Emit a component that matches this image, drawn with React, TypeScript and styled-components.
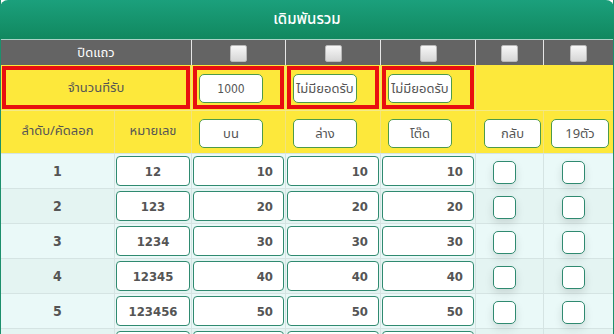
import styled, { createGlobalStyle } from "styled-components";

const GlobalStyle = createGlobalStyle`
body {
  margin: 0;
  background: #ffffff;
  font-family: "Noto Sans Thai", "Noto Sans", "DejaVu Sans", sans-serif;
}
* { box-sizing: border-box; }
`;

const COLS = "113px 77px 94px 95px 95px 68px 70px";
const NUM_FONT = `"DejaVu Sans Condensed", "DejaVu Sans", sans-serif`;

const Card = styled.div`
width: 614px;
border-left: 1px solid #1d8f6c;
border-right: 1px solid #1d8f6c;
`;

const Header = styled.div`
height: 39px;
display: flex;
align-items: center;
justify-content: center;
background: linear-gradient(#1ba07c, #11885f);
border-radius: 8px 8px 0 0;
color: #ffffff;
font-size: 15px;
font-weight: 500;
margin: 0 -1px;
`;

const Row = styled.div<{ $h: number; $bg: string }>`
display: grid;
grid-template-columns: ${COLS};
height: ${(p) => p.$h}px;
background: ${(p) => p.$bg};
`;

const GrayRow = styled(Row)`
border-top: 1px solid #a9d3c6;
`;

const HeadRow = styled(Row)`
border-top: 1px solid #f5ea86;
`;

const GrayCell = styled.div<{ $span?: number }>`
grid-column: span ${(p) => p.$span || 1};
display: flex;
align-items: center;
justify-content: center;
color: #ffffff;
font-size: 13px;
& + & { border-left: 1px solid #e6e6e6; }
`;

const Tick = styled.span`
width: 17px;
height: 17px;
border-radius: 2px;
border: 1px solid #b9b9b9;
background: linear-gradient(#f7f7f7, #d6d6d6);
margin-top: 1px;
`;

const ReceiveCell = styled.div<{ $span?: number }>`
grid-column: span ${(p) => p.$span || 1};
padding: 1px;
& + & { border-left: 1px solid #f1e27a; }
`;

const RedBox = styled.div<{ $center?: boolean }>`
height: 100%;
border: 4px solid #e80f0f;
display: flex;
align-items: ${(p) => (p.$center ? "center" : "flex-start")};
justify-content: ${(p) => (p.$center ? "center" : "flex-start")};
padding: ${(p) => (p.$center ? "0" : "4px 2px 0")};
color: #555555;
font-size: 13px;
`;

const SmallBox = styled.div<{ $w: number; $num?: boolean }>`
width: ${(p) => p.$w}px;
height: 29px;
background: #ffffff;
border: 1px solid #4d9a4a;
border-radius: 5px;
display: flex;
align-items: center;
justify-content: center;
color: #555555;
font-size: ${(p) => (p.$num ? 12 : 13)}px;
font-family: ${(p) => (p.$num ? NUM_FONT : "inherit")};
`;

const HeadCell = styled.div<{ $pad?: number }>`
display: flex;
align-items: flex-start;
justify-content: ${(p) => (p.$pad ? "flex-start" : "center")};
padding: ${(p) => (p.$pad ? `8px 0 0 ${p.$pad}px` : "10px 0 0")};
color: #555555;
font-size: 13px;
& + & { border-left: 1px solid #f2e37c; }
`;

const Body = styled.div``;

const DataRow = styled(Row)`
border-top: 1px solid #d5e4e3;
&:nth-child(even) { background: #e4f4f2; }
`;

const DataCell = styled.div`
display: flex;
align-items: center;
justify-content: center;
padding: 1px;
& + & { border-left: 1px solid #d5e4e3; }
`;

const Seq = styled.span`
font-family: ${NUM_FONT};
font-weight: bold;
font-size: 14px;
color: #555555;
`;

const NumBox = styled.div<{ $align: "center" | "right" }>`
width: 100%;
height: 30px;
background: #ffffff;
border: 1px solid #2f8a70;
border-radius: 4px;
display: flex;
align-items: center;
justify-content: ${(p) => (p.$align === "right" ? "flex-end" : "center")};
padding-right: ${(p) => (p.$align === "right" ? 10 : 0)}px;
font-family: ${NUM_FONT};
font-weight: bold;
font-size: 13px;
color: #555555;
`;

const Check = styled.span`
width: 23px;
height: 23px;
margin: 2px 10px 0 0;
background: #ffffff;
border: 1.5px solid #2f8a70;
border-radius: 5px;
box-shadow: 0 4px 8px rgba(0, 0, 0, 0.12);
`;

const rows = [
  { seq: "1", num: "12", v: "10" },
  { seq: "2", num: "123", v: "20" },
  { seq: "3", num: "1234", v: "30" },
  { seq: "4", num: "12345", v: "40" },
  { seq: "5", num: "123456", v: "50" },
  { seq: "6", num: "", v: "" },
];

export default function App() {
  return (
    <>
      <GlobalStyle />
      <Card>
        <Header>เดิมพันรวม</Header>
        <GrayRow $h={26} $bg="#646464">
          <GrayCell $span={2}>ปิดแถว</GrayCell>
          {[0, 1, 2, 3, 4].map((i) => (
            <GrayCell key={i}>
              <Tick />
            </GrayCell>
          ))}
        </GrayRow>
        <Row $h={45} $bg="#fde83b">
          <ReceiveCell $span={2}>
            <RedBox $center>จำนวนที่รับ</RedBox>
          </ReceiveCell>
          <ReceiveCell>
            <RedBox>
              <SmallBox $w={64} $num>1000</SmallBox>
            </RedBox>
          </ReceiveCell>
          <ReceiveCell>
            <RedBox>
              <SmallBox $w={64}>ไม่มียอดรับ</SmallBox>
            </RedBox>
          </ReceiveCell>
          <ReceiveCell>
            <RedBox>
              <SmallBox $w={64}>ไม่มียอดรับ</SmallBox>
            </RedBox>
          </ReceiveCell>
          <ReceiveCell $span={2} />
        </Row>
        <HeadRow $h={43} $bg="#fde83b">
          <HeadCell>ลำดับ/คัดลอก</HeadCell>
          <HeadCell>หมายเลข</HeadCell>
          <HeadCell $pad={7}>
            <SmallBox $w={64}>บน</SmallBox>
          </HeadCell>
          <HeadCell $pad={7}>
            <SmallBox $w={64}>ล่าง</SmallBox>
          </HeadCell>
          <HeadCell $pad={7}>
            <SmallBox $w={64}>โต๊ด</SmallBox>
          </HeadCell>
          <HeadCell $pad={8}>
            <SmallBox $w={57}>กลับ</SmallBox>
          </HeadCell>
          <HeadCell $pad={7}>
            <SmallBox $w={58}>19ตัว</SmallBox>
          </HeadCell>
        </HeadRow>
        <Body>
          {rows.map((r) => (
            <DataRow key={r.seq} $h={35} $bg="#eaf9f8">
              <DataCell>{r.num && <Seq>{r.seq}</Seq>}</DataCell>
              <DataCell>
                <NumBox $align="center">{r.num}</NumBox>
              </DataCell>
              <DataCell>
                <NumBox $align="right">{r.v}</NumBox>
              </DataCell>
              <DataCell>
                <NumBox $align="right">{r.v}</NumBox>
              </DataCell>
              <DataCell>
                <NumBox $align="right">{r.v}</NumBox>
              </DataCell>
              <DataCell>
                <Check />
              </DataCell>
              <DataCell>
                <Check />
              </DataCell>
            </DataRow>
          ))}
        </Body>
      </Card>
    </>
  );
}
